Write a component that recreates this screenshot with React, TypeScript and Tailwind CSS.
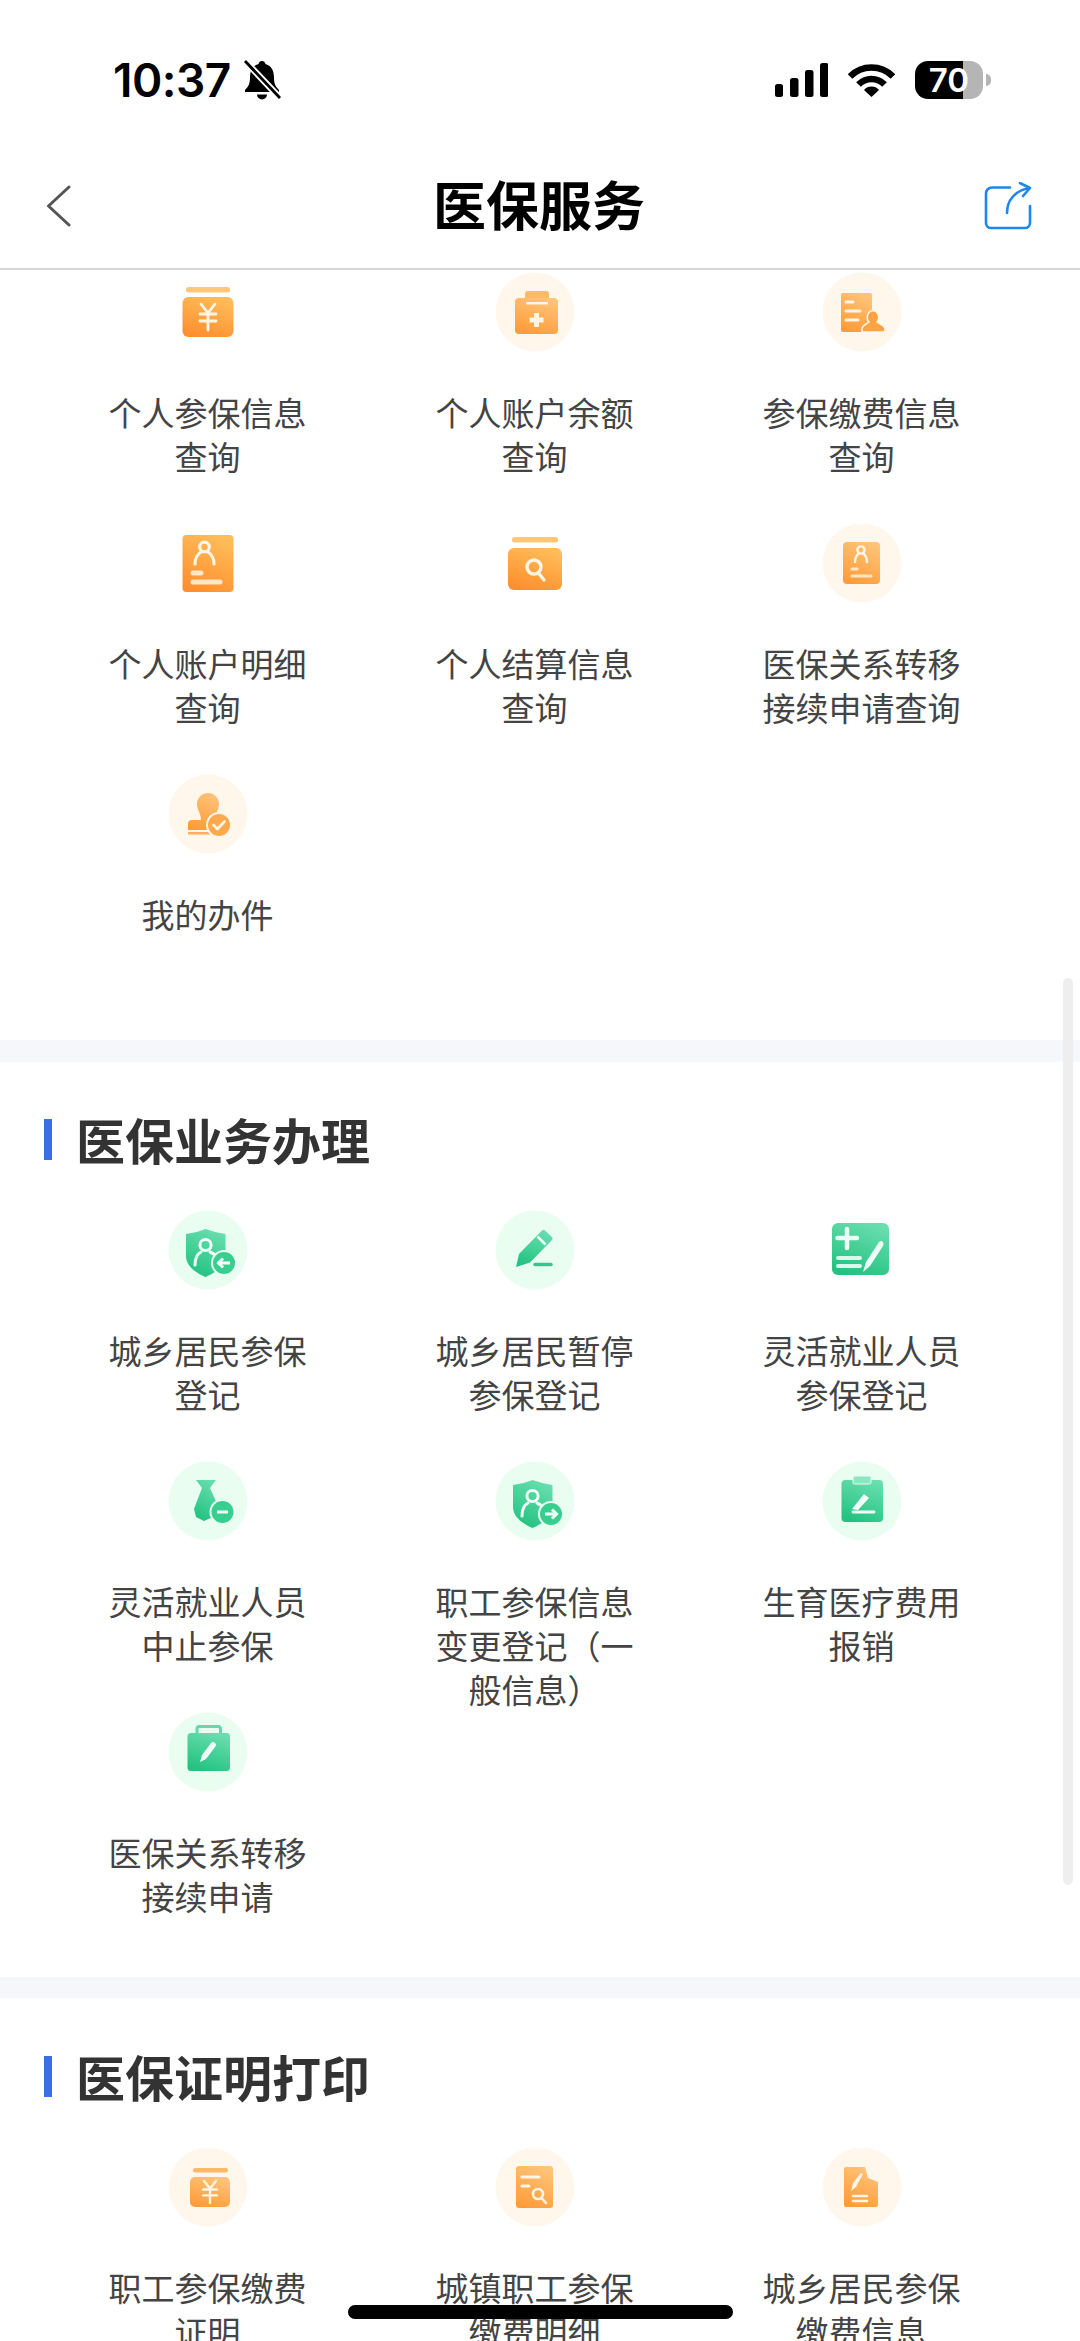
import React, { useId } from "react";

type IconName =
  | "jarYen" | "bagPlus" | "docPerson" | "cardPerson" | "jarSearch" | "cardPersonSmall" | "stamp"
  | "shieldIn" | "pencil" | "calc" | "tie" | "shieldOut" | "clipEdit" | "clipPen"
  | "jarYenSmall" | "docSearch" | "docPen";

const soft = new Set<IconName>(["bagPlus", "docPerson", "cardPersonSmall", "stamp", "shieldIn", "pencil", "tie", "shieldOut", "clipEdit", "clipPen", "jarYenSmall", "docSearch", "docPen"]);
const greens = new Set<IconName>(["shieldIn", "pencil", "calc", "tie", "shieldOut", "clipEdit", "clipPen"]);

const W = "#fff5e6";

function Yen({ x, y, s = 1 }: { x: number; y: number; s?: number }) {
  return (
    <g transform={`translate(${x} ${y}) scale(${s})`} fill="none" stroke={W} strokeWidth="2.8" strokeLinecap="round">
      <path d="M-7 -13 L0 -4 L7 -13 M-8 -3 H8 M-8 4 H8 M0 -4 V13" />
    </g>
  );
}

function Shape({ name, f }: { name: IconName; f: string }) {
  switch (name) {
    case "jarYen":
      return (
        <>
          <rect x="18" y="15" width="44" height="5.5" rx="2.5" fill="#ffc778" />
          <rect x="14.5" y="25" width="51" height="40" rx="6" fill={f} />
          <Yen x={40} y={45} />
        </>
      );
    case "jarYenSmall":
      return (
        <>
          <rect x="25" y="21" width="35" height="4.5" rx="2" fill="#ffb968" />
          <rect x="22" y="30" width="40" height="30" rx="5" fill={f} />
          <Yen x={42} y={45} s={0.85} />
        </>
      );
    case "bagPlus":
      return (
        <>
          <path d="M30 31 V22 a3 3 0 0 1 3 -3 H51 a3 3 0 0 1 3 3 V31 Z" fill="#ffb968" />
          <rect x="20" y="26" width="43" height="36" rx="4" fill={f} />
          <rect x="31" y="30" width="22" height="2.4" rx="1" fill={W} />
          <path d="M41.5 41 V55 M34.5 48 H48.5" stroke={W} strokeWidth="5" />
        </>
      );
    case "docPerson":
      return (
        <>
          <rect x="19" y="21" width="31" height="39" rx="2" fill={f} />
          <path d="M24 30 H31 M24 39 H38 M24 48 H36" stroke={W} strokeWidth="3" strokeLinecap="round" />
          <path d="M40 60 V57 C40 53 45 52 47 50 C44 47 45 39 51 38.5 C57 39 58 47 55 50 C57 52 63 53 63 57 V60 Z" fill="#ffa244" stroke="#fff7ec" strokeWidth="1.5" />
        </>
      );
    case "cardPerson":
      return (
        <>
          <rect x="14.5" y="12" width="51" height="57" rx="4" fill={f} />
          <circle cx="36.5" cy="24" r="4.8" fill="none" stroke={W} strokeWidth="3.2" />
          <path d="M27 41 C27 34 30 31 33 29 M40 29 C43 31 46 34 46 41" fill="none" stroke={W} strokeWidth="3.2" strokeLinecap="round" />
          <path d="M25 50 H33 M25 59 H52" stroke="#ffe6c5" strokeWidth="5" strokeLinecap="round" />
        </>
      );
    case "cardPersonSmall":
      return (
        <>
          <rect x="21" y="19" width="37" height="42" rx="4" fill={f} />
          <circle cx="39" cy="27" r="3.6" fill="none" stroke={W} strokeWidth="2.4" />
          <path d="M33 39 C33 35 34 33 36 31 M42 31 C44 33 45 35 45 39" fill="none" stroke={W} strokeWidth="2.4" strokeLinecap="round" />
          <path d="M30 46 H35 M30 53 H49" stroke="#ffe6c5" strokeWidth="3.2" strokeLinecap="round" />
        </>
      );
    case "jarSearch":
      return (
        <>
          <rect x="17" y="14" width="46" height="5.5" rx="2.5" fill="#ffc778" />
          <rect x="13" y="25" width="54" height="42" rx="6" fill={f} />
          <circle cx="39" cy="44" r="7" fill="none" stroke={W} strokeWidth="3.4" />
          <path d="M43.5 50 L49 57" stroke={W} strokeWidth="3.4" strokeLinecap="round" />
        </>
      );
    case "stamp":
      return (
        <>
          <path d="M29 30 a11 11 0 1 1 22 0 C51 36 47 39 47 46 H57 V56 H20 V50 a4 4 0 0 1 4 -4 H33 C33 39 29 36 29 30 Z" fill={f} />
          <rect x="20" y="58" width="30" height="2.5" fill="#ffae5b" />
          <circle cx="51" cy="51" r="13" fill="#fff7ec" />
          <circle cx="51" cy="51" r="11" fill="#ffa94f" />
          <path d="M45.5 51 L49.5 55 L56.5 47.5" fill="none" stroke={W} strokeWidth="2.6" strokeLinecap="round" strokeLinejoin="round" />
        </>
      );
    case "shieldIn":
    case "shieldOut":
      return (
        <>
          <path d="M18 24 C26 23 32 21 37.5 19 C44 21 50 23 57.5 24 V46 C57.5 56 47 63 37.5 67 C28 63 18 56 18 46 Z" fill={f} />
          <circle cx="37.5" cy="35" r="5.6" fill="none" stroke="#f2fff8" strokeWidth="3" />
          <path d="M27 55 C27 48 29 44 33 42 M42 42 C45 43 47 45 48 47" fill="none" stroke="#f2fff8" strokeWidth="3" strokeLinecap="round" />
          <circle cx="56" cy="53" r="13" fill="#eafdf1" />
          <circle cx="56" cy="53" r="11" fill="#36cf90" />
          {name === "shieldIn" ? (
            <path d="M62 53 H51 M55 48.5 L50.5 53 L55 57.5" fill="none" stroke="#f2fff8" strokeWidth="3" />
          ) : (
            <path d="M50 53 H61 M57 48.5 L61.5 53 L57 57.5" fill="none" stroke="#f2fff8" strokeWidth="3" />
          )}
        </>
      );
    case "pencil":
      return (
        <>
          <path d="M21 57 L24 44 L47 20.5 Q48.5 19 50 20.5 L57 27 Q58.5 28.5 57 30 L35 52.5 Z" fill={f} />
          <path d="M42.5 26.5 L50.5 34.5" stroke="#effff7" strokeWidth="2.5" />
          <path d="M40 54.5 H56" stroke="#2fc98c" strokeWidth="3.5" strokeLinecap="round" />
        </>
      );
    case "calc":
      return (
        <>
          <rect x="10" y="13" width="57" height="52" rx="6" fill={f} />
          <path d="M25 19 V38 M15.5 28 H35" stroke="#eefff7" strokeWidth="4.5" strokeLinecap="round" />
          <path d="M16 48 H38 M16 56 H38" stroke="#dcfaec" strokeWidth="4" strokeLinecap="round" />
          <path d="M41 62 L44 52 L57 32 Q59 30 61 32 Q62 34 61 36 L48 56 Z" fill="#eefff7" />
        </>
      );
    case "tie":
      return (
        <>
          <path d="M28 19 H48 L42 27 L50 45 L45 56 L36 60 L28 56 L26 48 L34 27 Z" fill={f} />
          <circle cx="54.5" cy="51" r="13" fill="#eafdf1" />
          <circle cx="54.5" cy="51" r="11" fill="#36cf90" />
          <path d="M49 51 H60" stroke="#f2fff8" strokeWidth="3" />
        </>
      );
    case "clipEdit":
      return (
        <>
          <rect x="19.5" y="19" width="41.5" height="42" rx="4" fill={f} />
          <rect x="31" y="15" width="18" height="8" rx="1.5" fill="#8ce6bf" stroke="#eafdf1" strokeWidth="1" />
          <path d="M30 48 L42 33 L47 37 L36 49 Z" fill="#f2fff8" />
          <path d="M31 51 H52" stroke="#f2fff8" strokeWidth="2.8" strokeLinecap="round" />
        </>
      );
    case "clipPen":
      return (
        <>
          <path d="M29 22 V17 a2.5 2.5 0 0 1 2.5 -2.5 H50 a2.5 2.5 0 0 1 2.5 2.5 V22" fill="none" stroke="#5fdaa8" strokeWidth="3" />
          <rect x="19.5" y="21" width="42.5" height="38" rx="3.5" fill={f} />
          <path d="M32 50 L34 43 L43 31 Q45 29 47 31 Q49 33 47 35 L38 47 Z" fill="#f2fff8" />
        </>
      );
    case "docSearch":
      return (
        <>
          <rect x="21" y="19" width="37" height="42" rx="3" fill={f} />
          <path d="M27 30 H44 M27 39 H34" stroke={W} strokeWidth="3" strokeLinecap="round" />
          <circle cx="43" cy="47" r="5" fill="none" stroke={W} strokeWidth="2.6" />
          <path d="M46.5 51 L51 56" stroke={W} strokeWidth="2.6" strokeLinecap="round" />
        </>
      );
    case "docPen":
      return (
        <>
          <path d="M24 20 H43 L46 31 L56 35 V58 a2 2 0 0 1 -2 2 H24 a2 2 0 0 1 -2 -2 V22 a2 2 0 0 1 2 -2 Z" fill={f} />
          <path d="M29 44 L31 36 L39 26 L41 27 L34 40 Z" fill={W} />
          <path d="M31 49 H45 M31 54 H45" stroke={W} strokeWidth="2.6" strokeLinecap="round" />
        </>
      );
  }
}

function ServiceIcon({ name }: { name: IconName }) {
  const id = useId();
  const isGreen = greens.has(name);
  const isSoft = soft.has(name);
  const top = isGreen ? "#68deae" : isSoft ? "#ffc47a" : "#ffbd5a";
  const bottom = isGreen ? "#22c281" : isSoft ? "#ff9c38" : "#ff8f2e";
  return (
    <svg viewBox="0 0 80 80" className="w-[80px] h-[80px] shrink-0">
      <defs>
        <linearGradient id={id} x1="0.7" y1="0" x2="0.3" y2="1">
          <stop offset="0" stopColor={top} />
          <stop offset="1" stopColor={bottom} />
        </linearGradient>
      </defs>
      {isSoft && <circle cx="40" cy="40" r="39.5" fill={isGreen ? "#eafdf1" : "#fff7ec"} />}
      <Shape name={name} f={`url(#${id})`} />
    </svg>
  );
}

function Service({ icon, label }: { icon: IconName; label: string }) {
  return (
    <div className="flex flex-col items-center">
      <ServiceIcon name={icon} />
      <p className="mt-[38px] w-[200px] text-center text-[33px] leading-[44px] text-[#444444]">{label}</p>
    </div>
  );
}

function Grid({ items }: { items: [IconName, string][] }) {
  return (
    <div className="ml-[44px] grid w-[981px] grid-cols-3 auto-rows-[251px]">
      {items.map(([icon, label]) => (
        <Service key={label} icon={icon} label={label} />
      ))}
    </div>
  );
}

function SectionTitle({ children }: { children: string }) {
  return (
    <div className="ml-[44px] mb-[50px] flex h-[41px] items-center">
      <span className="h-[41px] w-[8px] bg-[#3b6fe6]" />
      <h2 className="ml-[24px] pb-[3px] text-[49px] font-bold leading-[41px] text-[#333333]">{children}</h2>
    </div>
  );
}

function StatusBar() {
  return (
    <div className="flex h-[144px] items-center justify-between pl-[113px] pr-[89px] pt-[16px] text-black">
      <div className="flex items-center gap-[12px]">
        <span className="text-[46px] font-semibold leading-none tracking-[-0.5px]" style={{ fontFamily: "Inter, sans-serif" }}>10:37</span>
        <svg viewBox="0 0 38 40" className="h-[40px] w-[38px]">
          <path d="M19 1 C21 1 22 2 22.5 4 C29 6 31 11 31 18 C31 24 33 27 36 30 V32 H2 V30 C5 27 7 24 7 18 C7 11 9 6 15.5 4 C16 2 17 1 19 1 Z" fill="#000" />
          <path d="M14 34.5 H24 A5 5 0 0 1 14 34.5 Z" fill="#000" />
          <path d="M2 1 L37 38" stroke="#fff" strokeWidth="6.5" />
          <path d="M2 1 L37 38" stroke="#000" strokeWidth="2.8" />
        </svg>
      </div>
      <div className="flex items-center">
        <svg viewBox="0 0 53 34" className="h-[34px] w-[53px]">
          <rect x="0" y="21" width="8" height="13" rx="2.5" />
          <rect x="15" y="15" width="8.5" height="19" rx="2.5" />
          <rect x="30" y="7" width="8.5" height="27" rx="2.5" />
          <rect x="45" y="0" width="8.5" height="34" rx="2.5" />
        </svg>
        <svg viewBox="0 0 47 34" className="ml-[20px] h-[34px] w-[47px]">
          <path d="M2 13.5 A30 30 0 0 1 45 13.5" fill="none" stroke="#000" strokeWidth="6.5" />
          <path d="M10.5 21.5 A18 18 0 0 1 36.5 21.5" fill="none" stroke="#000" strokeWidth="6.5" />
          <path d="M16 27 A10 10 0 0 1 31 27 L23.5 34 Z" fill="#000" />
        </svg>
        <div className="relative ml-[20px] flex h-[38px] w-[68px]">
          <div className="h-full w-[48px] rounded-l-[13px] bg-black" />
          <div className="h-full w-[20px] rounded-r-[13px] bg-[#b5b5b5]" />
          <span className="absolute inset-0 flex items-center justify-center text-[33px] font-semibold leading-[38px] text-white" style={{ fontFamily: "Inter, sans-serif" }}>70</span>
        </div>
        <div className="ml-[3px] h-[12px] w-[5px] rounded-r-full bg-[#b5b5b5]" />
      </div>
    </div>
  );
}

function NavBar() {
  return (
    <div className="grid h-[126px] grid-cols-[1fr_auto_1fr] items-center border-b-2 border-[#d6d6d6] pl-[46px] pr-[48px]">
      <svg viewBox="0 0 25 42" className="h-[42px] w-[25px]">
        <path d="M23 2 L2.5 21 L23 40" fill="none" stroke="#555555" strokeWidth="3" strokeLinecap="round" strokeLinejoin="round" />
      </svg>
      <h1 className="pb-[6px] text-[53px] font-bold leading-none text-black">医保服务</h1>
      <svg viewBox="0 0 48 48" className="h-[48px] w-[48px] justify-self-end">
        <path d="M26 5.5 H8 a6 6 0 0 0 -6 6 V41 a5 5 0 0 0 5 5 H41 a5 5 0 0 0 5 -5 V24" fill="none" stroke="#1c87ee" strokeWidth="2.6" strokeLinecap="round" />
        <path d="M23 31 C23 18 31 9 45 6 M36 1 L46 6 L39 14" fill="none" stroke="#1c87ee" strokeWidth="2.6" strokeLinecap="round" strokeLinejoin="round" />
      </svg>
    </div>
  );
}

export default function App() {
  return (
    <div
      className="relative h-[2341px] w-[1080px] overflow-hidden bg-white"
      style={{ fontFamily: '"Noto Sans CJK SC", "Noto Sans", sans-serif' }}
    >
      <StatusBar />
      <NavBar />
      <section className="pt-[2px] pb-[15px]">
        <Grid
          items={[
            ["jarYen", "个人参保信息查询"],
            ["bagPlus", "个人账户余额查询"],
            ["docPerson", "参保缴费信息查询"],
            ["cardPerson", "个人账户明细查询"],
            ["jarSearch", "个人结算信息查询"],
            ["cardPersonSmall", "医保关系转移接续申请查询"],
            ["stamp", "我的办件"],
          ]}
        />
      </section>
      <div className="h-[22px] bg-[#f5f7fa]" />
      <section className="pt-[57px] pb-[14px]">
        <SectionTitle>医保业务办理</SectionTitle>
        <Grid
          items={[
            ["shieldIn", "城乡居民参保登记"],
            ["pencil", "城乡居民暂停参保登记"],
            ["calc", "灵活就业人员参保登记"],
            ["tie", "灵活就业人员中止参保"],
            ["shieldOut", "职工参保信息变更登记（一般信息）"],
            ["clipEdit", "生育医疗费用报销"],
            ["clipPen", "医保关系转移接续申请"],
          ]}
        />
      </section>
      <div className="h-[21px] bg-[#f5f7fa]" />
      <section className="pt-[58px]">
        <SectionTitle>医保证明打印</SectionTitle>
        <Grid
          items={[
            ["jarYenSmall", "职工参保缴费证明"],
            ["docSearch", "城镇职工参保缴费明细"],
            ["docPen", "城乡居民参保缴费信息"],
          ]}
        />
      </section>
      <div className="absolute left-[1063px] top-[978px] h-[907px] w-[10px] rounded-full bg-[#eeeeee]" />
      <div className="absolute left-[348px] top-[2305px] h-[14px] w-[385px] rounded-full bg-black" />
    </div>
  );
}
